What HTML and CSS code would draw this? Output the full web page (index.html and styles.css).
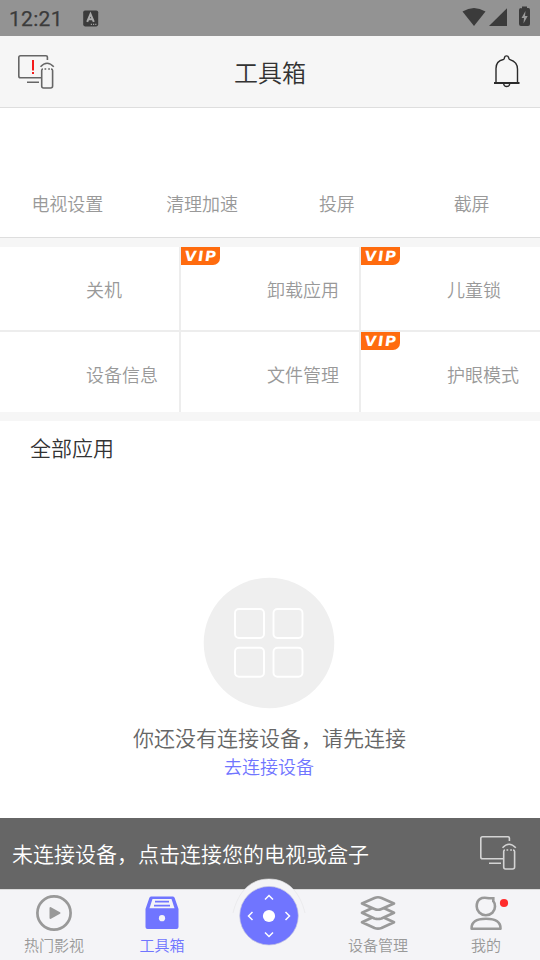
FILE: index.html
```html
<!DOCTYPE html>
<html lang="zh-CN">
<head>
<meta charset="utf-8">
<title>工具箱</title>
<link rel="stylesheet" href="styles.css">
</head>
<body>
<div class="app">
  <div class="status">
    <span class="clock">12:21</span>
    <svg class="ime" width="16" height="17" viewBox="0 0 16 17"><rect x="0.2" y="0.4" width="15" height="16" rx="1.8" fill="#3b3b3b"/><path d="M4.2 11.8 7.5 4l3.3 7.8M5.4 9.3h4.2" fill="none" stroke="#aaa" stroke-width="2"/><path d="M7.8 14.3h1.2m1 0h1.2m1 0h1.2" stroke="#bbb" stroke-width="1"/></svg>
    <svg class="signals" width="70" height="22" viewBox="0 0 70 22" fill="#3b3b3b"><path d="M.5 5.500Q12-1.500 23.500 5.500L12 20Z"/><path d="M45 2.300V20H27Z"/><path d="M60 2.500V.5h5v1.500h1.500Q68 2 68 4V18Q68 20 66 20H59Q57 20 57 18V4Q57 2 59 2Z"/><path d="m63.500 5-4 7h2.500l-.5 5.500 4.200-7.500H63Z" fill="#999"/></svg>
  </div>
  <header class="header">
    <svg width="40" height="38" viewBox="0 0 40 38" fill="none" stroke="#666" stroke-width="1.600"><path d="M24 23.800H3.500Q1.800 23.800 1.800 22V3.500Q1.800 1.800 3.500 1.800H29Q30.400 1.800 30.400 3v3M10 28.300h12"/><path d="M23.500 12.800Q30 5.700 36.800 12.800"/><path d="M26 15Q24.700 15 24.700 16.500V32Q24.700 34 26.500 34H33.500Q35.600 34 35.600 32V16.500Q35.600 15 34 15M27.500 15h1.700m2 0h1.700"/><path d="M16 6v10.500m0 1.500v2" stroke="#f41b1b" stroke-width="2"/></svg>
    <h1>工具箱</h1>
    <svg class="bell" width="27" height="34" viewBox="0 0 27 34" fill="none" stroke="#2b2b2b" stroke-width="1.400"><path d="M3 28V13.500Q3 6 10.300 4.500Q11.500 4.200 11.500 2.500Q11.800.9 13.500.9T15.600 2.500Q15.600 4.200 17 4.600Q24.500 7 24.500 14V28"/><path d="M1 28h25.500" stroke-width="2"/><path d="M10.700 29Q11 31.500 13.700 31.500T16.700 29"/></svg>
  </header>
  <nav class="quick"><span>电视设置</span><span>清理加速</span><span>投屏</span><span>截屏</span></nav>
  <section class="tools">
    <div class="tool">关机</div>
    <div class="tool"><b class="vip"><i>VIP</i></b>卸载应用</div>
    <div class="tool"><b class="vip"><i>VIP</i></b>儿童锁</div>
    <div class="tool lower">设备信息</div>
    <div class="tool lower">文件管理</div>
    <div class="tool lower"><b class="vip"><i>VIP</i></b>护眼模式</div>
  </section>
  <main class="apps">
    <h2>全部应用</h2>
    <svg class="empty" width="132" height="132" viewBox="0 0 132 132"><circle cx="66" cy="66" r="65.300" fill="#efefef"/><g fill="none" stroke="#fff" stroke-width="1.900"><rect x="32" y="32" width="29" height="29" rx="4"/><rect x="70.500" y="32" width="29" height="29" rx="4"/><rect x="32" y="70.700" width="29" height="29" rx="4"/><rect x="70.500" y="70.700" width="29" height="29" rx="4"/></g></svg>
    <p>你还没有连接设备，请先连接</p>
    <a>去连接设备</a>
  </main>
  <div class="connect">
    <span>未连接设备，点击连接您的电视或盒子</span>
    <svg width="40" height="38" viewBox="0 0 40 38" fill="none" stroke="#d4d4d4" stroke-width="1.600"><path d="M24 23.800H3.500Q1.800 23.800 1.800 22V3.500Q1.800 1.800 3.500 1.800H29Q30.400 1.800 30.400 3v3M10 28.300h12"/><path d="M23.500 12.800Q30 5.700 36.800 12.800"/><path d="M26 15Q24.700 15 24.700 16.500V32Q24.700 34 26.500 34H33.500Q35.600 34 35.600 32V16.500Q35.600 15 34 15M27.500 15h1.700m2 0h1.700"/></svg>
  </div>
  <footer class="tabs">
    <div class="tab"><svg width="40" height="38" viewBox="0 0 40 38"><circle cx="20" cy="19" r="16.600" fill="none" stroke="#999" stroke-width="2.700"/><path d="M16.500 14v10l9-5Z" fill="#999" stroke="#999" stroke-width="2" stroke-linejoin="round"/></svg><span>热门影视</span></div>
    <div class="tab active"><svg width="40" height="38" viewBox="0 0 40 38"><path d="M9 2.500H31Q32.300 2.500 32.700 4L36.500 15V33Q36.500 35 34.500 35H5.500Q3.500 35 3.500 33V15L7.300 4Q7.700 2.500 9 2.500Z" fill="#7075ff"/><path d="M10.500 5H29.500L32.500 14.300H7.500Z" fill="#f4f4f7"/><path d="M13 7.700H27M12 11.700H28" stroke="#7075ff" stroke-width="1.800"/><circle cx="20" cy="24.200" r="3.100" fill="#f4f4f7"/></svg><span>工具箱</span></div>
    <div class="tab"><svg class="remote" width="80" height="72" viewBox="0 0 80 72"><path d="M4 38C9 17 21 4 40 4S71 17 76 38Z" fill="#f4f4f7"/><path d="M4 38C9 17 21 4 40 4S71 17 76 38" fill="none" stroke="#e4e4e6" stroke-width=".6"/><circle cx="40" cy="40.700" r="29.300" fill="#7075ff" stroke="#c4c4df" stroke-width=".7"/><circle cx="40" cy="41" r="6.100" fill="#fff"/><path d="m36 24.500 4-4 4 4M36 57.500l4 4 4-4M23.500 37l-4 4 4 4M56.500 37l4 4-4 4" fill="none" stroke="#fff" stroke-width="1.500"/></svg></div>
    <div class="tab"><svg width="40" height="38" viewBox="0 0 40 38" fill="#f4f4f7" stroke="#999" stroke-width="2.700" stroke-linejoin="round"><path d="M4 28.300 16.500 22.500Q20 21.500 23.500 22.500L36 28.300 23.500 34Q20 35.200 16.500 34Z"/><path d="M4 18.800 16.500 13Q20 12 23.500 13L36 18.800 23.500 24.500Q20 25.500 16.500 24.500Z"/><path d="M4 9.500 16.500 4Q20 2.500 23.500 4L36 9.500 23.500 15Q20 16.500 16.500 15Z"/></svg><span>设备管理</span></div>
    <div class="tab"><svg width="48" height="38" viewBox="0 0 48 38" fill="none" stroke="#999" stroke-width="2.600"><path d="M31.300 8V4.300H27Q14.700 1.800 14.700 12.500C14.700 17 18.500 21.200 23.800 21.200S33 17.500 33 12.500Q33 9 31 6.500"/><path d="M9.600 34.700Q9 24.700 24 24.700T38.500 34.700Z" stroke-linejoin="round"/><circle cx="42" cy="9" r="4.100" fill="#ff2c2c" stroke="none"/></svg><span>我的</span></div>
  </footer>
</div>
</body>
</html>
```
FILE: styles.css
```css
* { box-sizing: border-box; }
body { margin: 0; font-family: "Noto Sans CJK SC", sans-serif; font-weight: 350; }
svg { display: block; flex: none; }
h1, h2, p { margin: 0; font-weight: inherit; }
.app { width: 540px; height: 960px; display: flex; flex-direction: column; background: #f6f6f6; overflow: hidden; }
.status { height: 36px; flex: none; background: #939393; display: flex; align-items: center; padding: 0 8px 0 9px; }
.clock { font: 400 21px/36px Roboto, sans-serif; color: #3b3b3b; width: 74px; padding-top: 2px; letter-spacing: 0.3px; -webkit-text-stroke: 0.25px #3b3b3b; }
.ime { margin-top: 1px; }
.signals { margin: -3px 0 0 auto; }
.header { height: 72px; flex: none; border-bottom: 1px solid #dedede; display: grid; grid-template-columns: 60px 1fr 60px; align-items: center; padding: 0 17px; }
.header svg { margin-top: 2px; }
.header .bell { justify-self: end; margin: 0 3px 0 0; }
.header h1 { text-align: center; font-size: 24px; line-height: 36px; color: #333; }
.quick { height: 130px; flex: none; background: #fff; border-bottom: 1px solid #dedede; display: grid; grid-template-columns: repeat(4, 1fr); align-items: end; text-align: center; padding: 0 1px 20px 0; font-size: 18px; line-height: 28px; color: #999; }
.tools { margin-top: 9px; height: 165px; flex: none; display: grid; grid-template-columns: 179px 178px 179px; grid-template-rows: 83px 80px; gap: 2px; background: #ededed; font-size: 18px; color: #999; }
.tool { background: #fff; position: relative; display: flex; align-items: center; padding: 0 0 0 86px; }
.lower { padding-top: 3px; }
.vip { position: absolute; left: 0; top: 0; width: 39px; height: 18px; border-radius: 0 0 7px; background: #ff6b0e; color: #fff; display: flex; align-items: center; justify-content: center; font: 700 14px/18px "DejaVu Sans", sans-serif; }
.vip i { font-style: normal; transform: skewX(-8deg) scaleX(1.08); letter-spacing: 1.3px; margin-left: 1px; }
.apps { margin-top: 9px; height: 397px; flex: none; background: #fff; display: flex; flex-direction: column; align-items: center; }
.apps h2 { align-self: flex-start; font-size: 21px; line-height: 32px; color: #333; padding: 10px 0 0 30px; }
.empty { margin: 114px 2px 0 0; }
.apps p { font-size: 21px; line-height: 30px; color: #666; margin: 13px 1px 0 0; }
.apps a { font-size: 18px; line-height: 28px; color: #7075ff; margin-right: 2px; }
.connect { height: 71px; flex: none; background: #666; color: #fff; display: flex; align-items: center; justify-content: space-between; padding: 0 21px 0 12px; font-size: 21px; }
.connect span { margin-top: -2px; }
.connect svg { margin-top: 1px; }
.tabs { height: 71px; flex: none; background: #f4f4f7; border-top: 1px solid #dadada; display: grid; grid-template-columns: repeat(5, 1fr); font-size: 15px; color: #999; }
.tab { display: flex; flex-direction: column; align-items: center; padding-top: 4px; position: relative; }
.tab span { line-height: 22px; margin-top: 2px; }
.active { color: #7075ff; }
.remote { position: absolute; left: 13px; top: -15px; }
```
